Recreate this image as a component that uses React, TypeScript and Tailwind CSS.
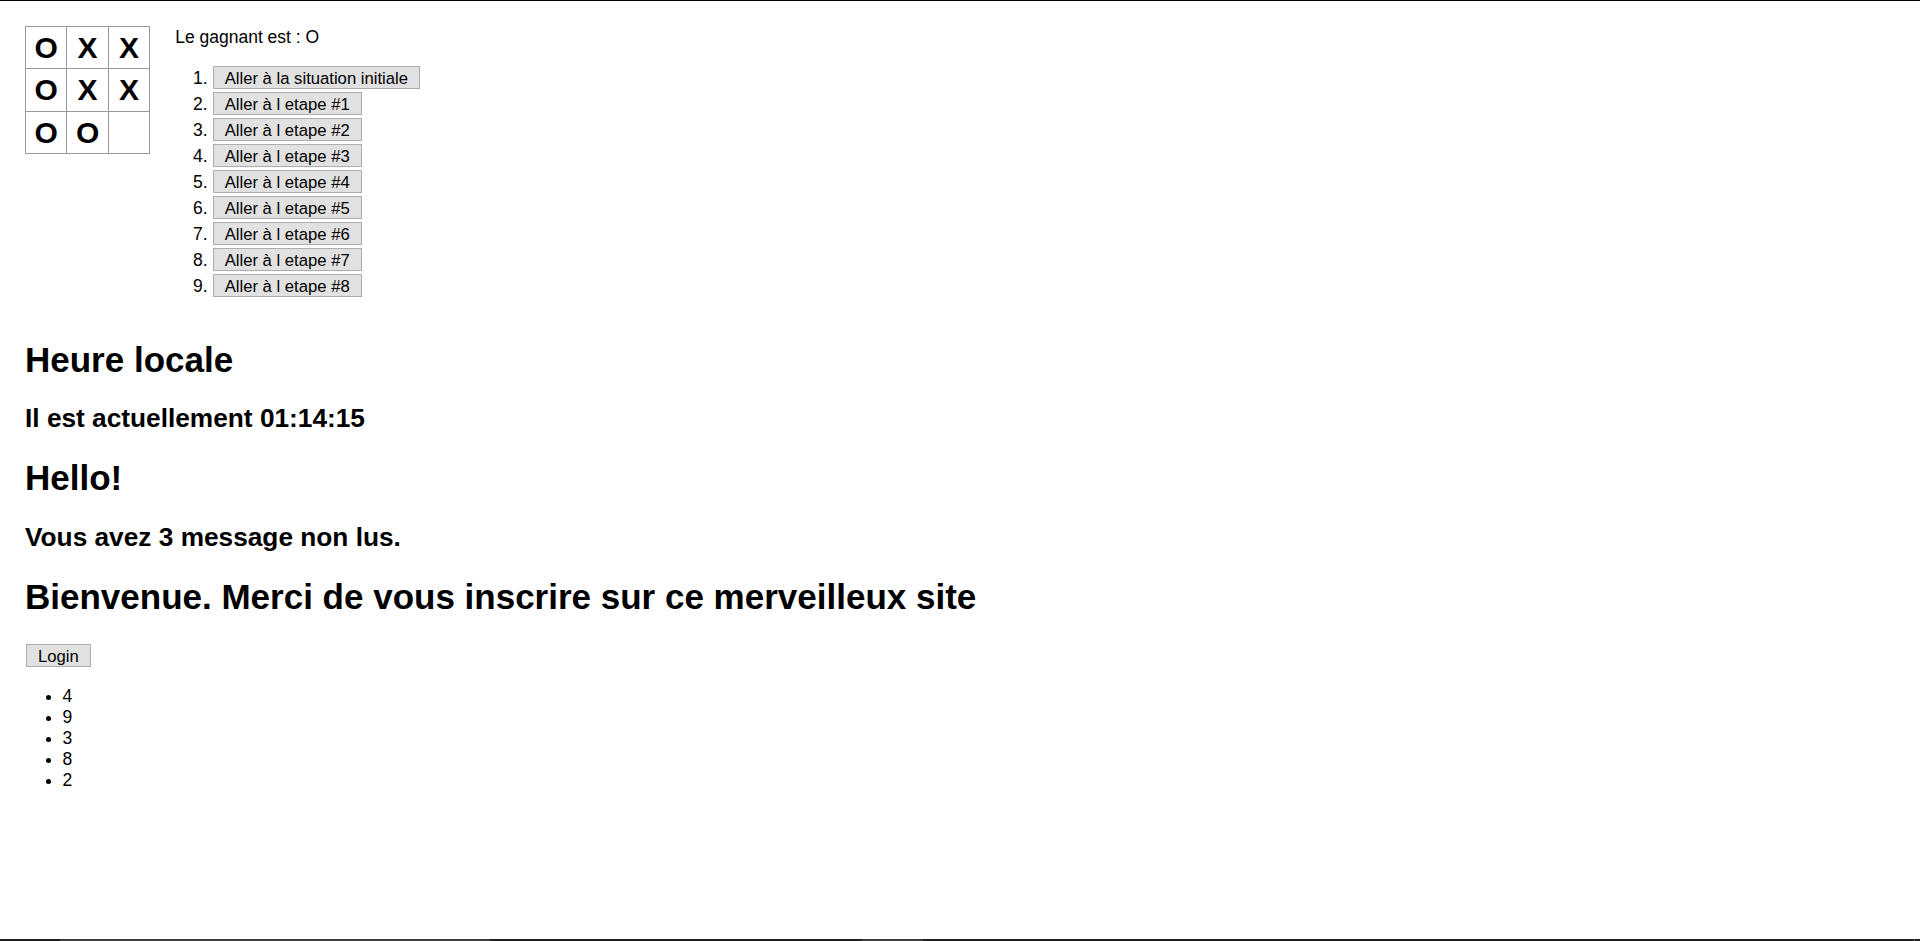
import React from "react";

const board = [
  ["O", "X", "X"],
  ["O", "X", "X"],
  ["O", "O", ""],
];

const moves = [
  "Aller à la situation initiale",
  "Aller à l etape #1",
  "Aller à l etape #2",
  "Aller à l etape #3",
  "Aller à l etape #4",
  "Aller à l etape #5",
  "Aller à l etape #6",
  "Aller à l etape #7",
  "Aller à l etape #8",
];

const btn =
  "h-[23px] px-[11px] pt-[2px] leading-[19px] text-[16.67px] bg-[#e1e1e1] border border-[#adadad] text-black whitespace-nowrap";

export default function App() {
  return (
    <div className="h-screen flex flex-col bg-white text-black font-['Liberation_Sans',Arial,sans-serif] border-t border-black overflow-hidden">
      <div className="flex-1 pt-[25px] px-[25px]">
        <div className="flex flex-row">
          <div className="flex flex-col">
            {board.map((row, i) => (
              <div key={i} className={"flex " + (i > 0 ? "-mt-px" : "")}>
                {row.map((c, j) => (
                  <div
                    key={j}
                    className={
                      "w-[42.4px] h-[43.3px] border border-[#999] bg-white text-center text-[30px] font-bold leading-[42px] " +
                      (j > 0 ? "-ml-px" : "")
                    }
                  >
                    {c}
                  </div>
                ))}
              </div>
            ))}
          </div>
          <div className="ml-[25px] mb-[20px]">
            <div className="text-[17.5px] leading-[20px] pt-px">Le gagnant est : O</div>
            <ol className="mt-[15px]">
              {moves.map((m, i) => (
                <li key={i} className="flex items-baseline h-[26px] pt-[3px]">
                  <span className="w-[37.5px] pr-[5px] text-right text-[17.5px]">{i + 1}.</span>
                  <button className={btn}>{m}</button>
                </li>
              ))}
            </ol>
          </div>
        </div>

        <h1 className="mt-[23.5px] text-[35px] font-bold leading-[40.25px]">Heure locale</h1>
        <h2 className="mt-[23.5px] text-[26.25px] font-bold leading-[30.2px]">Il est actuellement 01:14:15</h2>
        <h1 className="mt-[24.5px] text-[35px] font-bold leading-[40.25px]">Hello!</h1>
        <h2 className="mt-[24px] text-[26.25px] font-bold leading-[30.2px]">Vous avez 3 message non lus.</h2>
        <h1 className="mt-[24.5px] text-[35px] font-bold leading-[40.25px]">
          Bienvenue. Merci de vous inscrire sur ce merveilleux site
        </h1>
        <div className="mt-[27px] pl-px">
          <button className={btn}>Login</button>
        </div>
        <ul className="mt-[17px] pl-[37.5px] list-disc text-[17.5px] leading-[21px]">
          <li>4</li>
          <li>9</li>
          <li>3</li>
          <li>8</li>
          <li>2</li>
        </ul>
      </div>
      <div className="h-[2px] flex bg-[#1f1f1f]">
        <div className="w-[60px]" />
        <div className="w-[430px] bg-[#3d3d3d]" />
        <div className="w-[372px]" />
        <div className="w-[61px] bg-[#3d3d3d]" />
        <div className="flex-1" />
        <div className="w-px bg-[#6a6a6a]" />
        <div className="w-[5px]" />
      </div>
    </div>
  );
}
